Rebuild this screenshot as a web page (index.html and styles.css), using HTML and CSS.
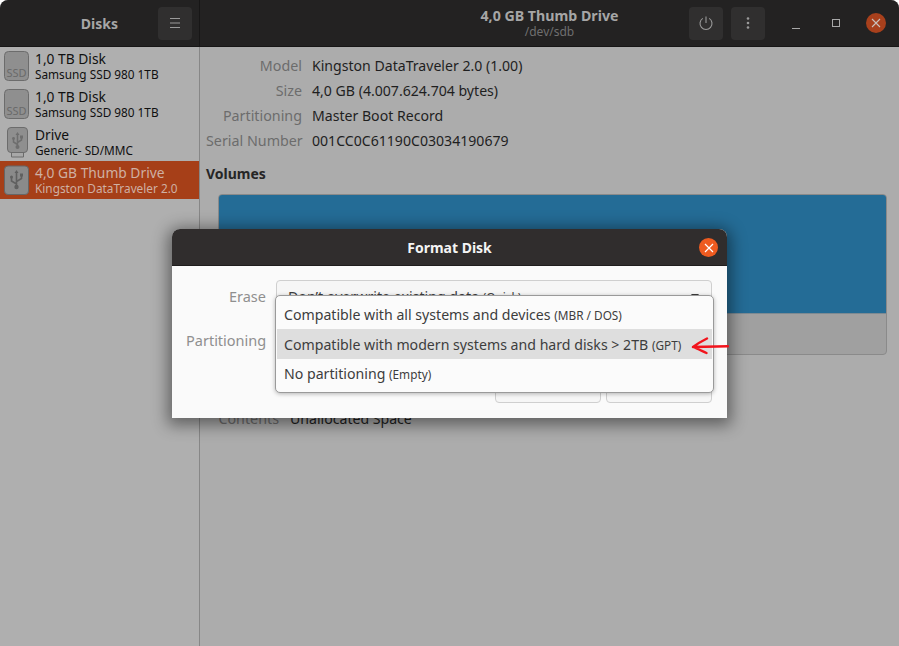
FILE: index.html
```html
<!DOCTYPE html>
<html>
<head>
<meta http-equiv="Content-Type" content="text/html; charset=utf-8"/>
<title>Disks</title>
<link rel="stylesheet" href="styles.css">
</head>
<body>
<div class="window">
  <header class="topbar">
    <div class="topbar-left">
      <div class="app-title">Disks</div>
      <div class="hbtn">
        <svg width="16" height="16" viewBox="0 0 16 16"><path d="M3 3.500h10M3 8h10M3 12.500h10" stroke="#9a9a9a" stroke-width="1" fill="none"/></svg>
      </div>
    </div>
    <div class="topbar-right">
      <div></div>
      <div class="drive-title">
        <div class="drive-name">4,0 GB Thumb Drive</div>
        <div class="drive-path">/dev/sdb</div>
      </div>
      <div class="controls">
        <div class="hbtn">
          <svg width="16" height="16" viewBox="0 0 16 16"><path d="M8 1.500v6.500M4.800 3.400a6 6 0 1 0 6.400 0" stroke="#9a9a9a" stroke-width="1.100" fill="none"/></svg>
        </div>
        <div class="hbtn">
          <svg width="16" height="16" viewBox="0 0 16 16"><circle cx="8" cy="3.500" r="1.300" fill="#9a9a9a"/><circle cx="8" cy="8" r="1.300" fill="#9a9a9a"/><circle cx="8" cy="12.500" r="1.300" fill="#9a9a9a"/></svg>
        </div>
        <div class="wm">
          <svg width="16" height="16" viewBox="0 0 16 16"><path d="M4 13.500h8" stroke="#a8a8a8" stroke-width="1" fill="none"/></svg>
          <svg width="16" height="16" viewBox="0 0 16 16"><rect x="4.500" y="4.500" width="7" height="7" stroke="#a8a8a8" stroke-width="1" fill="none"/></svg>
          <div class="wm-close">
            <svg width="10" height="10" viewBox="0 0 10 10"><path d="M1 1l8 8M9 1l-8 8" stroke="#c9c0bb" stroke-width="1.100"/></svg>
          </div>
        </div>
      </div>
    </div>
  </header>

  <div class="main">
    <aside class="sidebar">
      <div class="disk">
        <svg class="disk-icon" width="26" height="31" viewBox="0 0 26 31"><rect x="0.500" y="0.500" width="24" height="29" rx="4" fill="#8f8f8f" stroke="#6c6c6c"/><text x="12.500" y="26" class="ssd-text">SSD</text></svg>
        <div><div class="disk-name">1,0 TB Disk</div><div class="disk-model">Samsung SSD 980 1TB</div></div>
      </div>
      <div class="disk">
        <svg class="disk-icon" width="26" height="31" viewBox="0 0 26 31"><rect x="0.500" y="0.500" width="24" height="29" rx="4" fill="#8f8f8f" stroke="#6c6c6c"/><text x="12.500" y="26" class="ssd-text">SSD</text></svg>
        <div><div class="disk-name">1,0 TB Disk</div><div class="disk-model">Samsung SSD 980 1TB</div></div>
      </div>
      <div class="disk">
        <svg class="disk-icon" width="26" height="31" viewBox="0 0 26 31">
          <path d="M7.500 25h12v5h-12z" fill="#a8a8a8" stroke="#6c6c6c"/>
          <rect x="3.500" y="0.500" width="20" height="25" rx="3.500" fill="#8f8f8f" stroke="#6c6c6c"/>
          <path d="M13.500 5l-2 3h4z" fill="#6e6e6e"/>
          <path d="M13.500 7v12M13.500 17.500l-4-2.500v-3M13.500 15.500l4-2.500v-3" stroke="#6e6e6e" stroke-width="1.500" fill="none"/>
          <circle cx="9.500" cy="11.500" r="1.400" fill="#6e6e6e"/>
          <rect x="16" y="8.500" width="3" height="3" fill="#6e6e6e"/>
          <circle cx="13.500" cy="20" r="2" fill="#6e6e6e"/>
        </svg>
        <div><div class="disk-name">Drive</div><div class="disk-model">Generic- SD/MMC</div></div>
      </div>
      <div class="disk disk-active">
        <svg class="disk-icon" width="26" height="31" viewBox="0 0 26 31">
          <rect x="0.500" y="1" width="24" height="28.500" rx="3.500" fill="#8a8a8a" stroke="#666"/>
          <path d="M12.500 5l-2 3h4z" fill="#606060"/>
          <path d="M12.500 7v14M12.500 19l-5-3v-3.500M12.500 16.500l5-3v-3.500" stroke="#606060" stroke-width="1.600" fill="none"/>
          <circle cx="7.500" cy="12" r="1.500" fill="#606060"/>
          <rect x="16" y="8.500" width="3" height="3" fill="#606060"/>
          <circle cx="12.500" cy="22" r="2.200" fill="#606060"/>
        </svg>
        <div><div class="disk-name">4,0 GB Thumb Drive</div><div class="disk-model">Kingston DataTraveler 2.0</div></div>
      </div>
    </aside>

    <section class="content">
      <div class="info">
        <div class="info-label">Model</div><div class="info-value">Kingston DataTraveler 2.0 (1.00)</div>
        <div class="info-label">Size</div><div class="info-value">4,0 GB (4.007.624.704 bytes)</div>
        <div class="info-label">Partitioning</div><div class="info-value">Master Boot Record</div>
        <div class="info-label">Serial Number</div><div class="info-value">001CC0C61190C03034190679</div>
      </div>
      <h2 class="volumes">Volumes</h2>
      <div class="volume-bar">
        <div class="volume-fill"></div>
      </div>
      <div class="details">
        <div class="info-label">Contents</div><div class="info-value">Unallocated Space</div>
      </div>
    </section>
  </div>

  <div class="dialog">
    <div class="dialog-title">
      <span>Format Disk</span>
      <div class="dialog-close">
        <svg width="10" height="10" viewBox="0 0 10 10"><path d="M1 1l8 8M9 1l-8 8" stroke="#fff" stroke-width="1.200"/></svg>
      </div>
    </div>
    <div class="dialog-body">
      <div class="field-label">Erase</div>
      <div class="combo">Don’t overwrite existing data <small>(Quick)</small><span class="combo-arrow"></span></div>
      <div class="field-label">Partitioning</div>
      <div class="combo"></div>
      <div class="dialog-actions">
        <div class="btn"></div>
        <div class="btn"></div>
      </div>
    </div>
    <div class="popup">
      <div class="popup-item">Compatible with all systems and devices <small>(MBR / DOS)</small></div>
      <div class="popup-item popup-hover">Compatible with modern systems and hard disks &gt; 2TB <small>(GPT)</small></div>
      <div class="popup-item">No partitioning <small>(Empty)</small></div>
    </div>
    <svg class="red-arrow" width="38" height="20" viewBox="0 0 38 20"><path d="M37 10.200L2 11M16 2.500C11 5 6 8 2 11c4 1.500 9 4 13.500 6" stroke="#f2141c" stroke-width="2.400" fill="none" stroke-linecap="round" stroke-linejoin="round"/></svg>
  </div>
</div>
</body>
</html>
```

FILE: styles.css
```css
* {
  box-sizing: border-box;
}

html, body {
  margin: 0;
  height: 100%;
  background: #fff;
}

body {
  font-family: "Noto Sans", sans-serif;
  font-size: 14px;
  overflow: hidden;
}

.window {
  position: relative;
  width: 899px;
  height: 646px;
  display: flex;
  flex-direction: column;
  background: #acacac;
  border-radius: 8px 8px 0 0;
  overflow: hidden;
}

/* top bar */
.topbar {
  display: flex;
  height: 47px;
  flex: none;
  background: #232222;
  border-bottom: 1px solid #171616;
}

.topbar-left {
  width: 200px;
  flex: none;
  display: flex;
  align-items: center;
  justify-content: flex-end;
  gap: 40px;
  padding-right: 7px;
  border-right: 1px solid #171616;
}

.app-title {
  font-weight: 700;
  color: #a6a6a6;
}

.topbar-right {
  flex: 1;
  display: grid;
  grid-template-columns: 1fr auto 1fr;
  align-items: center;
}

.drive-title {
  text-align: center;
  line-height: 16px;
  padding-top: 1px;
}

.drive-name {
  font-size: 14.2px;
  font-weight: 700;
  color: #a6a6a6;
}

.drive-path {
  font-size: 12px;
  color: #6f6f6f;
}

.controls {
  display: flex;
  justify-content: flex-end;
  align-items: center;
  gap: 8px;
  padding-right: 13px;
}

.hbtn {
  width: 34px;
  height: 33px;
  display: flex;
  align-items: center;
  justify-content: center;
  background: #302f2f;
  border-radius: 4px;
}

.wm {
  display: flex;
  align-items: center;
  gap: 24px;
  margin-left: 15px;
}

.wm-close {
  width: 20px;
  height: 20px;
  margin-left: -2px;
  display: flex;
  align-items: center;
  justify-content: center;
  border-radius: 50%;
  background: #a8401c;
}

/* sidebar */
.main {
  flex: 1;
  display: flex;
  min-height: 0;
}

.sidebar {
  width: 200px;
  flex: none;
  background: #afafaf;
  border-right: 1px solid #878787;
}

.disk {
  height: 38px;
  display: flex;
  align-items: center;
  gap: 5px;
  padding-left: 4px;
  color: #101010;
}

.disk-active {
  background: #a63f18;
  color: #cfb0a3;
}

.disk-icon {
  flex: none;
}

.disk-name {
  font-size: 13.8px;
  line-height: 17px;
}

.disk-model {
  font-size: 11.8px;
  line-height: 15px;
}

.ssd-text {
  font-family: "Noto Sans", sans-serif;
  font-size: 11px;
  fill: #6a6a6a;
  text-anchor: middle;
}

/* content */
.content {
  flex: 1;
  padding: 6px 12px 0 6px;
}

.info {
  display: grid;
  grid-template-columns: 96px 1fr;
  column-gap: 10px;
  grid-auto-rows: 25px;
  align-items: center;
}

.info-label {
  font-size: 14.3px;
  text-align: right;
  color: #6c6c6c;
  white-space: nowrap;
}

.info-value {
  font-size: 14.1px;
  color: #1f1f1f;
}

.volumes {
  margin: 11px 0 10px;
  font-size: 14px;
  line-height: 20px;
  font-weight: 700;
  color: #262626;
}

.volume-bar {
  height: 161px;
  margin-left: 12px;
  background: #a0a0a0;
  border: 1px solid #8a8a8a;
  border-radius: 4px;
  overflow: hidden;
}

.volume-fill {
  height: 119px;
  background: #246c96;
  border-bottom: 1px solid #7d8a92;
}

.details {
  display: grid;
  grid-template-columns: 73px 1fr;
  column-gap: 11px;
  margin: 54px 0 0 0;
  align-items: center;
}

/* format dialog */
.dialog {
  position: absolute;
  left: 172px;
  top: 229px;
  width: 555px;
  height: 189px;
  background: #fafafa;
  border-radius: 8px 8px 0 0;
  box-shadow: 0 3px 16px 4px rgba(0, 0, 0, 0.45);
}

.dialog-title {
  position: relative;
  height: 37px;
  display: flex;
  align-items: center;
  justify-content: center;
  background: #302d2d;
  border-radius: 8px 8px 0 0;
  border-bottom: 1px solid #1f1d1d;
  font-weight: 700;
  color: #f4f4f4;
}

.dialog-close {
  position: absolute;
  right: 9px;
  top: 9px;
  width: 19px;
  height: 19px;
  display: flex;
  align-items: center;
  justify-content: center;
  border-radius: 50%;
  background: #ee5b20;
}

.dialog-body {
  display: grid;
  grid-template-columns: 80px 436px;
  grid-auto-rows: 34px;
  gap: 10px;
  padding: 14px 0 0 14px;
  align-items: center;
}

.field-label {
  font-size: 14.5px;
  line-height: 16px;
  margin-top: -2px;
  text-align: right;
  color: #8f8f8f;
  white-space: nowrap;
}

.combo {
  position: relative;
  height: 34px;
  padding: 6px 11px;
  background: #f6f6f6;
  border: 1px solid #cfcfcf;
  border-radius: 4px;
  font-size: 14.2px;
  color: #3d3d3d;
}

.combo small,
.popup-item small {
  font-size: 11.8px;
}

.combo-arrow {
  position: absolute;
  right: 12px;
  top: 13px;
  width: 0;
  height: 0;
  border-left: 4px solid transparent;
  border-right: 4px solid transparent;
  border-top: 5px solid #3d3d3d;
}

.dialog-actions {
  grid-column: 2;
  display: flex;
  justify-content: flex-end;
  gap: 5px;
  margin-top: 1px;
}

.btn {
  width: 106px;
  height: 34px;
  background: #f6f6f6;
  border: 1px solid #cfcfcf;
  border-radius: 4px;
}

.popup {
  position: absolute;
  left: 103px;
  top: 66px;
  width: 439px;
  height: 98px;
  padding: 3px 1px;
  background: #fbfbfb;
  border: 1px solid #9a9a9a;
  border-radius: 5px;
  box-shadow: 0 1px 4px rgba(0, 0, 0, 0.28);
}

.popup-item {
  height: 30px;
  font-size: 14.15px;
  line-height: 32px;
  padding-left: 7px;
  color: #3d3d3d;
}

.popup-item:last-child {
  line-height: 30px;
}

.popup-hover {
  background: #dedede;
}

.red-arrow {
  position: absolute;
  left: 519px;
  top: 107px;
}
```
